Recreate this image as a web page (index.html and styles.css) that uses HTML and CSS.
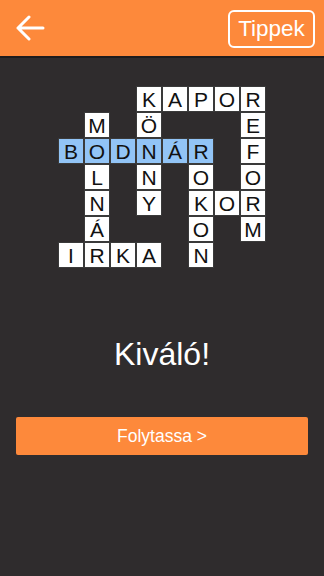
FILE: index.html
```html
<!DOCTYPE html>
<html lang="hu">
<head>
<meta charset="utf-8">
<link rel="stylesheet" href="styles.css">
</head>
<body>
<header class="bar">
  <svg class="back" width="30" height="26" viewBox="0 0 30 26"><path d="M28 13H3M14 2L3 13l11 11" fill="none" stroke="#fff" stroke-width="3" stroke-linecap="round" stroke-linejoin="round"/></svg>
  <div class="tips">Tippek</div>
</header>
<main class="main">
  <div class="grid">
    <div class="c" style="grid-area:1/4">K</div><div class="c" style="grid-area:1/5">A</div><div class="c" style="grid-area:1/6">P</div><div class="c" style="grid-area:1/7">O</div><div class="c" style="grid-area:1/8">R</div>
    <div class="c" style="grid-area:2/2">M</div><div class="c" style="grid-area:2/4">Ö</div><div class="c" style="grid-area:2/8">E</div>
    <div class="c b" style="grid-area:3/1">B</div><div class="c b" style="grid-area:3/2">O</div><div class="c b" style="grid-area:3/3">D</div><div class="c b" style="grid-area:3/4">N</div><div class="c b" style="grid-area:3/5">Á</div><div class="c b" style="grid-area:3/6">R</div><div class="c" style="grid-area:3/8">F</div>
    <div class="c" style="grid-area:4/2">L</div><div class="c" style="grid-area:4/4">N</div><div class="c" style="grid-area:4/6">O</div><div class="c" style="grid-area:4/8">O</div>
    <div class="c" style="grid-area:5/2">N</div><div class="c" style="grid-area:5/4">Y</div><div class="c" style="grid-area:5/6">K</div><div class="c" style="grid-area:5/7">O</div><div class="c" style="grid-area:5/8">R</div>
    <div class="c" style="grid-area:6/2">Á</div><div class="c" style="grid-area:6/6">O</div><div class="c" style="grid-area:6/8">M</div>
    <div class="c" style="grid-area:7/1">I</div><div class="c" style="grid-area:7/2">R</div><div class="c" style="grid-area:7/3">K</div><div class="c" style="grid-area:7/4">A</div><div class="c" style="grid-area:7/6">N</div>
  </div>
  <div class="msg">Kiváló!</div>
  <div class="btn">Folytassa &gt;</div>
</main>
</body>
</html>
```
FILE: styles.css
```css
html, body { margin: 0; padding: 0; }
body {
  width: 324px; height: 576px; overflow: hidden;
  background: #2f2c2d;
  font-family: "Liberation Sans", Arial, sans-serif;
}
.bar {
  height: 56px;
  background: #fd893b;
  border-bottom: 2px solid #1e1c1d;
  display: flex; align-items: center; justify-content: space-between;
  padding: 0 9px 0 15px;
}
.back { display: block; }
.tips {
  box-sizing: border-box;
  height: 38px; width: 87px;
  border: 2px solid #fff; border-radius: 6px;
  color: #fff; font-size: 22.5px;
  display: flex; align-items: center; justify-content: center;
  margin-top: 2px;
}
.main { display: flex; flex-direction: column; align-items: center; }
.grid {
  margin-top: 29px;
  display: grid;
  grid-template-columns: repeat(8, 24px);
  grid-template-rows: repeat(7, 24px);
  gap: 2px;
}
.c {
  background: #fff;
  outline: 1px solid #3a3a3a;
  color: #111;
  font-size: 21px;
  display: flex; align-items: center; justify-content: center;
  line-height: 1;
}
.b { background: #92c4f6; }
.msg {
  margin-top: 69px;
  color: #fff; font-size: 32px; line-height: 36px;
}
.btn {
  box-sizing: border-box;
  margin-top: 45px;
  width: 292px; height: 38px;
  background: #fd893b; border-radius: 2px;
  color: #fff; font-size: 17.5px;
  display: flex; align-items: center; justify-content: center;
}
```
